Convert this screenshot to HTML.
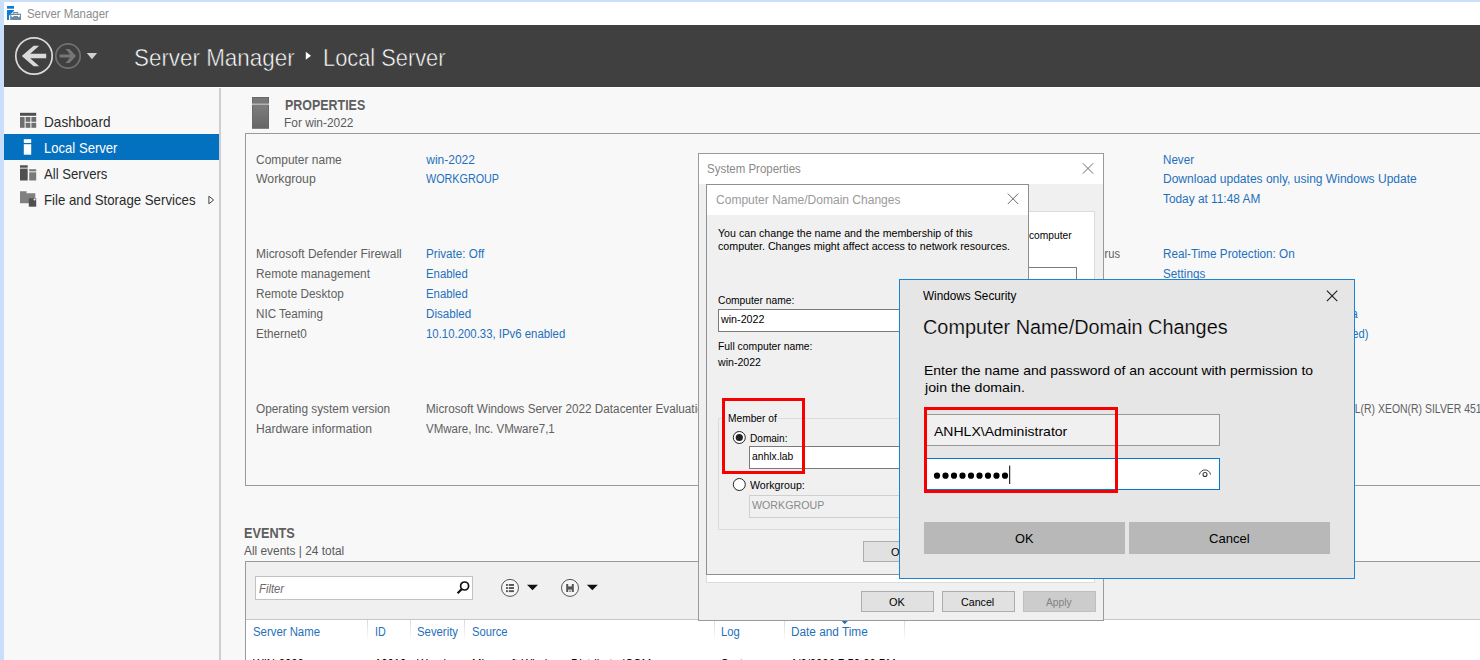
<!DOCTYPE html>
<html lang="en"><head><meta charset="utf-8"><title>Server Manager</title>
<style>
html,body{margin:0;padding:0;}
body{width:1480px;height:660px;overflow:hidden;position:relative;background:#f8f8f8;font-family:"Liberation Sans",sans-serif;}
.a{position:absolute;}
.bb{box-sizing:border-box;}
.t{position:absolute;white-space:nowrap;line-height:40px;transform-origin:0 0;display:block;}
svg{position:absolute;overflow:visible;}
</style></head><body>
<div class="a" style="left:0px;top:0px;width:1480px;height:660px;background:#f8f8f8;"></div>
<div class="a" style="left:0px;top:0px;width:1480px;height:2px;background:#c9defa;"></div>
<div class="a" style="left:0px;top:0px;width:4px;height:660px;background:#c9defa;"></div>
<div class="a" style="left:4px;top:2px;width:1476px;height:23px;background:#ffffff;"></div>
<div class="a" style="left:4px;top:25px;width:1476px;height:62px;background:#404040;"></div>
<svg style="left:7px;top:6px" width="15" height="15" viewBox="0 0 15 15"><rect x="0" y="0" width="7" height="2.7" fill="#0f7bd6"/><path d="M0 4.1 H7 V4.8 L2 9.8 V14 H0 Z" fill="#0f7bd6"/><rect x="3.2" y="7.7" width="10.8" height="6.3" fill="#6c8aa3"/><path d="M6.6 7.7 V6.5 H10.6 V7.7" fill="none" stroke="#6c8aa3" stroke-width="1.1"/><path d="M4 8.9 H13.3 L12.4 10.9 H11.2 L10.8 10.1 H6.5 L6.1 10.9 H4.9 Z" fill="#ffffff"/></svg>
<span class="t" style="left:27.20px;top:-6px;font-size:12px;color:#8c8c8c;transform:scaleX(0.9506);">Server Manager</span>
<svg style="left:0;top:25px" width="130" height="62" viewBox="0 25 130 62"><circle cx="34" cy="56" r="18.2" fill="none" stroke="#dadada" stroke-width="1.7"/><path d="M21.8 56 L33.6 45.8 H39.2 L30.2 53.7 H46.2 V58.3 H30.2 L39.2 66.2 H33.6 Z" fill="#dadada"/><circle cx="68" cy="56" r="12.2" fill="none" stroke="#707070" stroke-width="1.7"/><path d="M76 56 L69.5 48.9 H65.4 L70.3 54.4 H59.6 V57.6 H70.3 L65.4 63.1 H69.5 Z" fill="#767676"/><path d="M86.8 52.9 H97.1 L91.95 59.2 Z" fill="#d0d0d0"/></svg>
<span class="t" style="left:133.80px;top:38px;font-size:24.4px;color:#ffffff;transform:scaleX(0.9184);-webkit-text-stroke:0.55px #404040;">Server Manager</span>
<svg style="left:305px;top:51px" width="8" height="10"><path d="M0.8 0.8 L6 4.8 L0.8 8.8 Z" fill="#ffffff"/></svg>
<span class="t" style="left:323.20px;top:38px;font-size:24.4px;color:#ffffff;transform:scaleX(0.8944);-webkit-text-stroke:0.55px #404040;">Local Server</span>
<div class="a" style="left:4px;top:87px;width:1476px;height:1px;background:#fdfdfd;"></div>
<div class="a" style="left:219px;top:88px;width:2px;height:572px;background:#cecece;"></div>
<div class="a" style="left:4px;top:134px;width:215px;height:26px;background:#0471c0;"></div>
<svg style="left:20px;top:112px" width="17" height="17" viewBox="0 0 17 17"><rect x="0" y="0.8" width="16.2" height="3" fill="#505050"/><rect x="0" y="5" width="4.6" height="10.8" fill="#6e6e6e"/><rect x="5.6" y="5" width="4.8" height="4.8" fill="#6e6e6e"/><rect x="11.4" y="5" width="4.8" height="4.8" fill="#6e6e6e"/><rect x="5.6" y="10.8" width="4.8" height="5" fill="#6e6e6e"/><rect x="11.4" y="10.8" width="4.8" height="5" fill="#6e6e6e"/></svg>
<svg style="left:23px;top:139px" width="9" height="16" viewBox="0 0 9 16"><rect x="0.8" y="0.2" width="7.4" height="3.8" fill="#ffffff"/><rect x="0.8" y="5.2" width="7.4" height="10.5" fill="#ffffff"/></svg>
<svg style="left:20px;top:165px" width="17" height="16" viewBox="0 0 17 16"><rect x="0" y="0.3" width="7.7" height="2.4" fill="#505050"/><rect x="0" y="3.6" width="7.7" height="11.9" fill="#505050"/><rect x="9.2" y="4.2" width="7" height="2.2" fill="#7a7a7a"/><rect x="9.2" y="7.3" width="7" height="8.2" fill="#7a7a7a"/></svg>
<svg style="left:20px;top:191px" width="17" height="16" viewBox="0 0 17 16"><path d="M0 0.3 H6.5 V2.2 H15.3 V12.3 H0 Z" fill="#808080"/><rect x="0" y="2.4" width="15.3" height="0.9" fill="#f8f8f8" opacity="0.0"/><rect x="8.8" y="7.3" width="7.4" height="8.4" fill="#505050"/><circle cx="14.6" cy="8.6" r="1" fill="#f0f0f0"/></svg>
<span class="t" style="left:44.30px;top:102px;font-size:13.9px;color:#2b2b2b;transform:scaleX(0.9790);">Dashboard</span>
<span class="t" style="left:44.30px;top:128px;font-size:13.9px;color:#ffffff;transform:scaleX(0.9416);">Local Server</span>
<span class="t" style="left:44.30px;top:154px;font-size:13.9px;color:#2b2b2b;transform:scaleX(0.9445);">All Servers</span>
<span class="t" style="left:44.30px;top:180px;font-size:13.9px;color:#2b2b2b;transform:scaleX(0.9527);">File and Storage Services</span>
<svg style="left:208px;top:195px" width="7" height="10"><path d="M0.9 1.2 L5.6 5 L0.9 8.8 Z" fill="none" stroke="#444" stroke-width="1"/></svg>
<svg style="left:252px;top:97px" width="17" height="32" viewBox="0 0 17 32"><defs><linearGradient id="tw" x1="0" y1="0" x2="0" y2="1"><stop offset="0" stop-color="#7e7e7e"/><stop offset="1" stop-color="#666666"/></linearGradient></defs><rect x="0" y="0" width="17" height="6.7" fill="#666"/><rect x="0.8" y="0.8" width="15.4" height="5.9" fill="#787878"/><rect x="0" y="6.7" width="17" height="1.1" fill="#d0d0d0"/><rect x="0" y="7.8" width="17" height="24" fill="#666"/><rect x="0.8" y="7.8" width="15.4" height="23.2" fill="url(#tw)"/></svg>
<span class="t" style="left:284.70px;top:85px;font-size:14.2px;color:#5e5e5e;font-weight:bold;transform:scaleX(0.8771);">PROPERTIES</span>
<span class="t" style="left:283.60px;top:103px;font-size:12.6px;color:#5a5a5a;transform:scaleX(0.9442);">For win-2022</span>
<div class="a bb" style="left:245px;top:133px;width:1300px;height:353px;border:1px solid #9a9a9a;"></div>
<span class="t" style="left:256.00px;top:140px;font-size:12px;color:#606060;transform:scaleX(0.9965);">Computer name</span>
<span class="t" style="left:426.28px;top:140px;font-size:12px;color:#1f70bb;">win-2022</span>
<span class="t" style="left:256.00px;top:159px;font-size:12px;color:#606060;transform:scaleX(1.0219);">Workgroup</span>
<span class="t" style="left:426.25px;top:159px;font-size:12px;color:#1f70bb;transform:scaleX(0.8976);">WORKGROUP</span>
<span class="t" style="left:256.00px;top:234px;font-size:12px;color:#606060;transform:scaleX(0.9980);">Microsoft Defender Firewall</span>
<span class="t" style="left:426.25px;top:234px;font-size:12px;color:#1f70bb;transform:scaleX(0.9736);">Private: Off</span>
<span class="t" style="left:256.00px;top:254px;font-size:12px;color:#606060;transform:scaleX(0.9879);">Remote management</span>
<span class="t" style="left:426.25px;top:254px;font-size:12px;color:#1f70bb;transform:scaleX(0.9479);">Enabled</span>
<span class="t" style="left:256.00px;top:274px;font-size:12px;color:#606060;transform:scaleX(0.9818);">Remote Desktop</span>
<span class="t" style="left:426.25px;top:274px;font-size:12px;color:#1f70bb;transform:scaleX(0.9479);">Enabled</span>
<span class="t" style="left:256.00px;top:294px;font-size:12px;color:#606060;transform:scaleX(0.9690);">NIC Teaming</span>
<span class="t" style="left:426.25px;top:294px;font-size:12px;color:#1f70bb;transform:scaleX(0.9692);">Disabled</span>
<span class="t" style="left:256.00px;top:314px;font-size:12px;color:#606060;transform:scaleX(0.9754);">Ethernet0</span>
<span class="t" style="left:426.25px;top:314px;font-size:12px;color:#1f70bb;transform:scaleX(0.9486);">10.10.200.33, IPv6 enabled</span>
<span class="t" style="left:256.00px;top:409px;font-size:12px;color:#606060;transform:scaleX(1.0112);">Hardware information</span>
<span class="t" style="left:426.25px;top:409px;font-size:12px;color:#606060;transform:scaleX(0.9605);">VMware, Inc. VMware7,1</span>
<span class="t" style="left:256.00px;top:389px;font-size:12px;color:#606060;transform:scaleX(0.9863);">Operating system version</span>
<span class="t" style="left:426.25px;top:389px;font-size:12px;color:#606060;transform:scaleX(0.9776);">Microsoft Windows Server 2022 Datacenter Evaluation</span>
<span class="t" style="left:1163.25px;top:140px;font-size:12px;color:#1f70bb;transform:scaleX(0.9683);">Never</span>
<span class="t" style="left:1163.25px;top:159px;font-size:12px;color:#1f70bb;transform:scaleX(1.0019);">Download updates only, using Windows Update</span>
<span class="t" style="left:1163.25px;top:179px;font-size:12px;color:#1f70bb;transform:scaleX(0.9872);">Today at 11:48 AM</span>
<span class="t" style="left:1163.25px;top:234px;font-size:12px;color:#1f70bb;transform:scaleX(0.9764);">Real-Time Protection: On</span>
<span class="t" style="left:1163.25px;top:254px;font-size:12px;color:#1f70bb;transform:scaleX(0.9744);">Settings</span>
<span class="t" style="left:0.00px;top:234px;font-size:12px;color:#606060;transform:scaleX(0.9300);left:auto;right:360.00px;transform-origin:100% 0;">Microsoft Defender Antivirus</span>
<span class="t" style="left:0.00px;top:294px;font-size:12px;color:#1f70bb;transform:scaleX(0.9300);left:auto;right:122.00px;transform-origin:100% 0;">(UTC+07:00) Bangkok, Hanoi, Jakarta</span>
<span class="t" style="left:0.00px;top:314px;font-size:12px;color:#1f70bb;transform:scaleX(0.9300);left:auto;right:112.00px;transform-origin:100% 0;">00454-60000-00001-AA070 (activated)</span>
<span class="t" style="left:1330.91px;top:389px;font-size:12px;color:#606060;transform:scaleX(0.8702);">INTEL(R) XEON(R) SILVER 4510</span>
<span class="t" style="left:244.30px;top:513px;font-size:14.2px;color:#5e5e5e;font-weight:bold;transform:scaleX(0.8957);">EVENTS</span>
<span class="t" style="left:244.30px;top:531px;font-size:12px;color:#5a5a5a;transform:scaleX(0.9904);">All events | 24 total</span>
<div class="a bb" style="left:245px;top:561px;width:1300px;height:120px;border:1px solid #9a9a9a;background:#f0f0f0;"></div>
<div class="a" style="left:246px;top:620px;width:1234px;height:40px;background:#ffffff;"></div>
<div class="a" style="left:246px;top:619px;width:1234px;height:1px;background:#c6c6c6;"></div>
<div class="a bb" style="left:255px;top:576px;width:218px;height:24px;border:1px solid #c2c2c2;background:#ffffff;"></div>
<span class="t" style="left:259.00px;top:569px;font-size:12px;color:#6a6a6a;font-style:italic;transform:scaleX(0.9417);">Filter</span>
<svg style="left:456px;top:580px" width="15" height="15" viewBox="0 0 15 15"><circle cx="8.6" cy="6" r="4" fill="none" stroke="#111" stroke-width="1.7"/><path d="M5.8 8.9 L1.6 13.2" stroke="#111" stroke-width="2.2"/></svg>
<svg style="left:500px;top:578px" width="100" height="20" viewBox="500 578 100 20"><circle cx="510" cy="587.9" r="8.5" fill="#f6f6f6" stroke="#555" stroke-width="1"/><g fill="#555"><rect x="506" y="584" width="1.9" height="1.9"/><rect x="508.8" y="584" width="5.2" height="1.9"/><rect x="506" y="587.1" width="1.9" height="1.9"/><rect x="508.8" y="587.1" width="5.2" height="1.9"/><rect x="506" y="590.2" width="1.9" height="1.9"/><rect x="508.8" y="590.2" width="5.2" height="1.9"/></g><path d="M527 584.8 H538 L532.5 590.2 Z" fill="#111"/><circle cx="570" cy="587.9" r="8.5" fill="#f6f6f6" stroke="#555" stroke-width="1"/><path d="M566.2 584 H573.8 V592 H566.2 Z" fill="#555"/><rect x="568.2" y="584" width="3.6" height="2.4" fill="#f6f6f6"/><rect x="568.2" y="589.6" width="3.6" height="2.4" fill="#f6f6f6"/><rect x="569.4" y="590.4" width="1.2" height="1.6" fill="#555"/><path d="M586.8 584.8 H597.8 L592.3 590.2 Z" fill="#111"/></svg>
<span class="t" style="left:252.50px;top:612px;font-size:12px;color:#1f70bb;transform:scaleX(0.9478);">Server Name</span>
<span class="t" style="left:375.00px;top:612px;font-size:12px;color:#1f70bb;transform:scaleX(0.8958);">ID</span>
<span class="t" style="left:417.00px;top:612px;font-size:12px;color:#1f70bb;transform:scaleX(0.9459);">Severity</span>
<span class="t" style="left:471.50px;top:612px;font-size:12px;color:#1f70bb;transform:scaleX(0.9338);">Source</span>
<span class="t" style="left:721.25px;top:612px;font-size:12px;color:#1f70bb;transform:scaleX(0.9368);">Log</span>
<span class="t" style="left:791.25px;top:612px;font-size:12px;color:#1f70bb;transform:scaleX(0.9834);">Date and Time</span>
<div class="a" style="left:367px;top:620px;width:1px;height:22px;background:linear-gradient(#d9d9d9,#ffffff);"></div>
<div class="a" style="left:410px;top:620px;width:1px;height:22px;background:linear-gradient(#d9d9d9,#ffffff);"></div>
<div class="a" style="left:464px;top:620px;width:1px;height:22px;background:linear-gradient(#d9d9d9,#ffffff);"></div>
<div class="a" style="left:714px;top:620px;width:1px;height:22px;background:linear-gradient(#d9d9d9,#ffffff);"></div>
<div class="a" style="left:784px;top:620px;width:1px;height:22px;background:linear-gradient(#d9d9d9,#ffffff);"></div>
<div class="a" style="left:904px;top:620px;width:1px;height:22px;background:linear-gradient(#d9d9d9,#ffffff);"></div>
<svg style="left:841px;top:620px" width="8" height="5"><path d="M0.2 0.6 H7.2 L3.7 4.2 Z" fill="#2a6fb7"/></svg>
<span class="t" style="left:252.50px;top:644px;font-size:12px;color:#000;transform:scaleX(0.9400);">WIN-2022</span>
<span class="t" style="left:375.00px;top:644px;font-size:12px;color:#000;transform:scaleX(0.9400);">10010</span>
<span class="t" style="left:417.00px;top:644px;font-size:12px;color:#000;transform:scaleX(0.9400);">Warning</span>
<span class="t" style="left:471.50px;top:644px;font-size:12px;color:#000;transform:scaleX(0.9400);">Microsoft-Windows-DistributedCOM</span>
<span class="t" style="left:721.25px;top:644px;font-size:12px;color:#000;transform:scaleX(0.9400);">System</span>
<span class="t" style="left:791.25px;top:644px;font-size:12px;color:#000;transform:scaleX(0.9400);">1/2/2026 7:50:20 PM</span>
<div class="a bb" style="left:698px;top:153px;width:406px;height:468px;border:1px solid #9b9b9b;background:#f0f0f0;"></div>
<div class="a" style="left:699px;top:154px;width:404px;height:30px;background:#ffffff;"></div>
<span class="t" style="left:707.00px;top:149px;font-size:12px;color:#8a8a8a;transform:scaleX(0.9563);">System Properties</span>
<svg style="left:1082px;top:163px" width="12" height="12"><path d="M0.8 0.3 L11.2 10.7 M11.2 0.3 L0.8 10.7" stroke="#6a6a6a" stroke-width="1"/></svg>
<div class="a bb" style="left:1020px;top:211px;width:75px;height:372px;border:1px solid #dcdcdc;background:#ffffff;"></div>
<div class="a bb" style="left:706px;top:575px;width:389px;height:8px;border:1px solid #dcdcdc;background:#ffffff;border-top:none;"></div>
<span class="t" style="left:1029.00px;top:215px;font-size:11px;color:#000;transform:scaleX(0.9289);">computer</span>
<div class="a bb" style="left:1000px;top:267px;width:77px;height:40px;border:1px solid #7a7a7a;background:#ffffff;"></div>
<div class="a bb" style="left:861px;top:591px;width:73px;height:21px;border:1px solid #adadad;background:#e1e1e1;"></div>
<div class="a bb" style="left:942px;top:591px;width:73px;height:21px;border:1px solid #adadad;background:#e1e1e1;"></div>
<div class="a bb" style="left:1023px;top:591px;width:73px;height:21px;border:1px solid #bfbfbf;background:#cccccc;"></div>
<span class="t" style="left:889.25px;top:582px;font-size:11.6px;color:#000;transform:scaleX(0.9403);">OK</span>
<span class="t" style="left:961.25px;top:582px;font-size:11.6px;color:#000;transform:scaleX(0.9212);">Cancel</span>
<span class="t" style="left:1046.00px;top:582px;font-size:11.6px;color:#838383;transform:scaleX(0.8862);">Apply</span>
<div class="a bb" style="left:706px;top:184px;width:323px;height:391px;border:1px solid #8f8f8f;background:#f0f0f0;"></div>
<div class="a" style="left:707px;top:185px;width:321px;height:30px;background:#ffffff;"></div>
<span class="t" style="left:715.50px;top:180px;font-size:12px;color:#9a9a9a;transform:scaleX(1.0023);">Computer Name/Domain Changes</span>
<svg style="left:1007px;top:193px" width="12" height="12"><path d="M0.8 0.6 L11.2 11 M11.2 0.6 L0.8 11" stroke="#6a6a6a" stroke-width="1"/></svg>
<span class="t" style="left:718.00px;top:213px;font-size:11px;color:#000;transform:scaleX(0.9671);">You can change the name and the membership of this</span>
<span class="t" style="left:718.00px;top:226px;font-size:11px;color:#000;transform:scaleX(0.9714);">computer. Changes might affect access to network resources.</span>
<span class="t" style="left:718.00px;top:280px;font-size:11px;color:#000;transform:scaleX(0.9308);">Computer name:</span>
<div class="a bb" style="left:718px;top:309px;width:300px;height:23px;border:1px solid #7a7a7a;background:#ffffff;"></div>
<span class="t" style="left:720.53px;top:299px;font-size:11px;color:#000;transform:scaleX(0.9738);">win-2022</span>
<span class="t" style="left:718.00px;top:326px;font-size:11px;color:#000;transform:scaleX(0.9425);">Full computer name:</span>
<span class="t" style="left:718.03px;top:342px;font-size:11px;color:#000;transform:scaleX(0.9626);">win-2022</span>
<div class="a bb" style="left:718px;top:418px;width:300px;height:112px;border:1px solid #dcdcdc;"></div>
<div class="a" style="left:725px;top:415px;width:53px;height:8px;background:#f0f0f0;"></div>
<span class="t" style="left:727.50px;top:398px;font-size:11px;color:#000;transform:scaleX(0.9269);">Member of</span>
<svg style="left:732px;top:430px" width="15" height="62" viewBox="732 430 15 62"><circle cx="739.3" cy="437.5" r="6" fill="#ffffff" stroke="#222" stroke-width="1"/><circle cx="739.3" cy="437.5" r="3.6" fill="#222"/><circle cx="739.3" cy="484.5" r="6" fill="#ffffff" stroke="#222" stroke-width="1"/></svg>
<span class="t" style="left:749.50px;top:418px;font-size:11px;color:#000;transform:scaleX(0.9157);">Domain:</span>
<div class="a bb" style="left:749px;top:446px;width:260px;height:23px;border:1px solid #7a7a7a;background:#ffffff;"></div>
<span class="t" style="left:751.75px;top:436px;font-size:11px;color:#000;transform:scaleX(0.9368);">anhlx.lab</span>
<span class="t" style="left:749.50px;top:465px;font-size:11px;color:#000;transform:scaleX(0.9664);">Workgroup:</span>
<div class="a bb" style="left:749px;top:495px;width:260px;height:23px;border:1px solid #cfcfcf;background:#f0f0f0;"></div>
<span class="t" style="left:752.00px;top:485px;font-size:11px;color:#8a8a8a;transform:scaleX(0.9690);">WORKGROUP</span>
<div class="a bb" style="left:863px;top:541px;width:73px;height:21px;border:1px solid #adadad;background:#e1e1e1;"></div>
<span class="t" style="left:891.00px;top:532px;font-size:11.6px;color:#000;transform:scaleX(0.9500);">OK</span>
<div class="a bb" style="left:722px;top:398px;width:83px;height:76px;border:3px solid #f80000;"></div>
<div class="a bb" style="left:899px;top:279px;width:456px;height:300px;border:1px solid #1883d7;background:#e6e6e6;"></div>
<span class="t" style="left:923.25px;top:276px;font-size:12px;color:#000;transform:scaleX(0.9805);">Windows Security</span>
<svg style="left:1326px;top:290px" width="12" height="12"><path d="M0.9 0.7 L11.3 11.1 M11.3 0.7 L0.9 11.1" stroke="#1a1a1a" stroke-width="1.1"/></svg>
<span class="t" style="left:923.40px;top:307px;font-size:20px;color:#000;transform:scaleX(0.9928);-webkit-text-stroke:0.2px #e6e6e6;">Computer Name/Domain Changes</span>
<span class="t" style="left:924.25px;top:351px;font-size:13px;color:#000;transform:scaleX(1.0724);">Enter the name and password of an account with permission to</span>
<span class="t" style="left:924.61px;top:368px;font-size:13px;color:#000;transform:scaleX(1.0884);">join the domain.</span>
<div class="a bb" style="left:924px;top:414px;width:296px;height:32px;border:1px solid #999999;background:#f0f0f0;"></div>
<span class="t" style="left:933.75px;top:412px;font-size:13px;color:#000;transform:scaleX(1.0787);">ANHLX\Administrator</span>
<div class="a bb" style="left:924px;top:458px;width:296px;height:32px;border:1px solid #0078d7;background:#ffffff;"></div>
<svg style="left:930px;top:460px" width="100" height="30" viewBox="930 460 100 30"><circle cx="937.00" cy="475.7" r="3.1" fill="#000"/><circle cx="945.50" cy="475.7" r="3.1" fill="#000"/><circle cx="954.00" cy="475.7" r="3.1" fill="#000"/><circle cx="962.50" cy="475.7" r="3.1" fill="#000"/><circle cx="971.00" cy="475.7" r="3.1" fill="#000"/><circle cx="979.50" cy="475.7" r="3.1" fill="#000"/><circle cx="988.00" cy="475.7" r="3.1" fill="#000"/><circle cx="996.50" cy="475.7" r="3.1" fill="#000"/><circle cx="1005.00" cy="475.7" r="3.1" fill="#000"/><rect x="1009.2" y="465.6" width="1" height="18.4" fill="#000"/></svg>
<svg style="left:1198px;top:468px" width="14" height="11" viewBox="0 0 14 11"><path d="M1.4 6.6 C2.8 0.4 11.2 0.4 12.6 6.6" fill="none" stroke="#444" stroke-width="1"/><circle cx="7" cy="6.5" r="2" fill="none" stroke="#3a3a3a" stroke-width="1.1"/></svg>
<div class="a" style="left:924px;top:522px;width:201px;height:32px;background:#b8b8b8;"></div>
<div class="a" style="left:1129px;top:522px;width:201px;height:32px;background:#b8b8b8;"></div>
<span class="t" style="left:1015.00px;top:519px;font-size:13px;color:#000;transform:scaleX(0.9850);">OK</span>
<span class="t" style="left:1209.00px;top:519px;font-size:13px;color:#000;transform:scaleX(1.0057);">Cancel</span>
<div class="a bb" style="left:924px;top:407px;width:194px;height:86px;border:3px solid #f80000;"></div>
</body></html>
